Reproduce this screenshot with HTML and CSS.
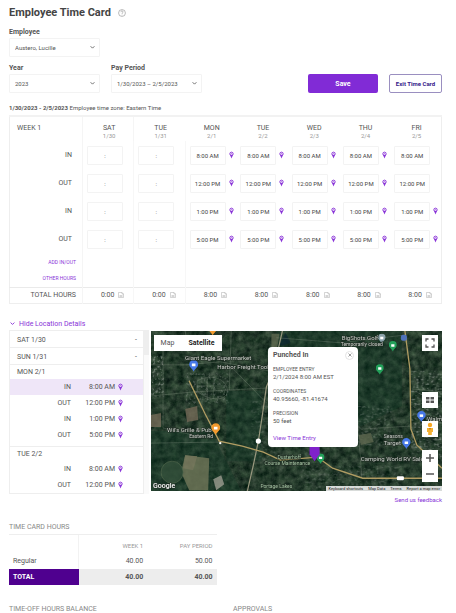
FILE: index.html
```html
<!DOCTYPE html>
<html lang="en">
<head>
    <meta charset="UTF-8">
    <meta name="viewport" content="width=device-width, initial-scale=1.0">
    <title>Employee Time Card</title>
    <link rel="stylesheet" href="styles.css">
</head>
<body>
    <!-- shared icons -->
    <svg class="sprite" aria-hidden="true">
        <symbol id="pin" viewBox="0 0 10 14">
            <circle cx="5" cy="4.6" r="3.3" fill="#fff" stroke="currentColor" stroke-width="2"/>
            <path d="M2 7h6L5 14z" fill="currentColor"/>
            <circle cx="5" cy="4.6" r="1" fill="currentColor"/>
        </symbol>
        <symbol id="note" viewBox="0 0 12 12">
            <path d="M1 1h7l3 3v7H1zM8 1v3h3M3 7h6M3 9h6" fill="none" stroke="currentColor"/>
        </symbol>
        <symbol id="place" viewBox="0 0 10 13">
            <path d="M5 13C4 10 0 8 0 5a5 5 0 0 1 10 0c0 3-4 5-5 8z" fill="currentColor"/>
            <path d="M3 4h4v3H3z" fill="#fff"/>
        </symbol>
    </svg>

    <header class="title">
        <h1>Employee Time Card</h1>
        <svg class="help" viewBox="0 0 14 14"><circle cx="7" cy="7" r="6" fill="none" stroke="#888"/><path d="M5 5.500c0-3 4-2.500 4-.3C9 6.800 7 6.500 7 8.500M7 10v1" fill="none" stroke="#888"/></svg>
    </header>

    <form class="filters">
        <div class="field">
            <label for="employee">Employee</label>
            <select id="employee"><option>Austero, Lucille</option></select>
        </div>
        <div class="filter-row">
            <div class="field">
                <label for="year">Year</label>
                <select id="year"><option>2023</option></select>
            </div>
            <div class="field">
                <label for="period">Pay Period</label>
                <select id="period"><option>1/30/2023 – 2/5/2023</option></select>
            </div>
            <div class="actions">
                <button type="button" class="btn save">Save</button>
                <button type="button" class="btn exit">Exit Time Card</button>
            </div>
        </div>
    </form>

    <p class="range"><b>1/30/2023 - 2/5/2023</b> Employee time zone: Eastern Time</p>

    <table class="week">
        <thead>
            <tr>
                <th>WEEK 1</th>
                <th>SAT<small>1/30</small></th>
                <th>TUE<small>1/31</small></th>
                <th>MON<small>2/1</small></th>
                <th>TUE<small>2/2</small></th>
                <th>WED<small>2/3</small></th>
                <th>THU<small>2/4</small></th>
                <th>FRI<small>2/5</small></th>
            </tr>
        </thead>
        <tbody id="punches"></tbody>
        <tbody class="links">
            <tr><th><a href="#">ADD IN/OUT</a></th><td></td><td></td><td></td><td></td><td></td><td></td><td></td></tr>
            <tr><th><a href="#">OTHER HOURS</a></th><td></td><td></td><td></td><td></td><td></td><td></td><td></td></tr>
        </tbody>
        <tfoot>
            <tr id="totals"><th>TOTAL HOURS</th></tr>
        </tfoot>
    </table>

    <a class="toggle" href="#"><svg viewBox="0 0 8 8"><path d="M1 2.500l3 3 3-3" fill="none" stroke="currentColor" stroke-width="1.500"/></svg>Hide Location Details</a>

    <section class="location">
        <div class="days">
            <div class="day">SAT 1/30<span>-</span></div>
            <div class="day">SUN 1/31<span>-</span></div>
            <div class="group">
                <h3>MON 2/1</h3>
                <div class="punch active"><span>IN</span><span>8:00 AM</span><svg class="pin"><use href="#pin"/></svg></div>
                <div class="punch"><span>OUT</span><span>12:00 PM</span><svg class="pin"><use href="#pin"/></svg></div>
                <div class="punch"><span>IN</span><span>1:00 PM</span><svg class="pin"><use href="#pin"/></svg></div>
                <div class="punch"><span>OUT</span><span>5:00 PM</span><svg class="pin"><use href="#pin"/></svg></div>
            </div>
            <div class="group">
                <h3>TUE 2/2</h3>
                <div class="punch"><span>IN</span><span>8:00 AM</span><svg class="pin"><use href="#pin"/></svg></div>
                <div class="punch"><span>OUT</span><span>12:00 PM</span><svg class="pin"><use href="#pin"/></svg></div>
            </div>
        </div>
        <div class="scrollbar"><i></i></div>

        <div class="map">
            <svg class="ground" viewBox="0 0 290 160" preserveAspectRatio="xMidYMid slice">
                <defs>
                    <filter id="trees" x="0" y="0" width="100%" height="100%" color-interpolation-filters="sRGB">
                        <feTurbulence type="fractalNoise" baseFrequency="0.15" numOctaves="5" seed="8"/>
                        <feColorMatrix values="0.35 0 0 0 -0.03  0.35 0.050 0 0 0.030  0.3 0 0 0 0.020  0 0 0 0 1"/>
                    </filter>
                    <filter id="roofs" x="0" y="0" width="100%" height="100%" color-interpolation-filters="sRGB">
                        <feTurbulence type="fractalNoise" baseFrequency="0.4" numOctaves="2" seed="3"/>
                        <feColorMatrix values="0 0 0 0 0.6  0 0 0 0 0.63  0 0 0 0 0.6  0 5 0 0 -2.700"/>
                    </filter>
                </defs>
                <rect width="290" height="160" filter="url(#trees)"/>
                <g fill="#143a28" opacity=".4">
                    <path d="M125 0h125v75l-40 20h-85zM0 100h60l30 60H0zM75 60h35v70H75z"/>
                </g>
                <g opacity=".6">
                    <rect y="25" width="12" height="40" filter="url(#roofs)"/>
                    <rect x="35" y="42" width="42" height="30" filter="url(#roofs)" opacity=".6"/>
                    <rect x="260" y="40" width="30" height="90" filter="url(#roofs)"/>
                    <rect x="190" y="75" width="50" height="40" filter="url(#roofs)" opacity=".6"/>
                    <rect x="150" y="135" width="100" height="25" filter="url(#roofs)" opacity=".5"/>
                    <rect x="100" y="70" width="25" height="60" filter="url(#roofs)" opacity=".4"/>
                </g>
                <g opacity=".75">
                    <path d="M0 84l10-2v14H0zM34 78l12-3 1 14-11 2z" fill="#7a6e5b"/>
                    <path d="M34 124l24 3-1 32H38l-8-18z" fill="#777b5d"/>
                    <path d="M34 124l12 1-4 14-10-2z" fill="#8b8668"/>
                    <circle cx="21" cy="141" r="11" fill="#36523c" stroke="#65785a" stroke-width=".6"/>
                    <path d="M62 148l8-4 3 9-8 6z" fill="#a6a599"/>
                    <path d="M120 3h8l-2 13-6 2zM207 104l12-2 3 9-13 3z" fill="#626b52"/>
                    <path d="M128 14l6-12 5 10-8 3z" fill="#0d2731"/>
                </g>
                <g fill="none" stroke="#a9b1a0" stroke-width=".5" opacity=".5">
                    <path d="M0 34h34l35-3 48 9M0 65l42-4 75-4M34 0l3 22M80 0l-2 59M80 36l35 36M12 12v85l34 8M46 50c14-8 30-2 30 10S55 69 46 60zM56 47v22M62 46v22M46 55h29M0 112l68-1M125 7l64 5 66-8M169 127l-10-64M210 147l-6-90M260 58l30 3M261 92h29M210 98l49-3"/>
                </g>
                <path d="M131 0l-9 39-7 17-4 28-4 26-5 24-6 26" fill="none" stroke="#99987f" stroke-width="1.200"/>
                <path d="M38 50l16 33 14 27 23 5 21 6 17 8 37-3 15 11 30 10h80M253 0l5 38 1 60 6 16 25 23" fill="none" stroke="#b09c62" stroke-width="1.300"/>
                <g fill="#fff"><circle cx="107" cy="110" r="2.600"/><circle cx="69" cy="112" r="1.200"/><rect x="245" y="145" width="7" height="4" rx="1"/></g>
                <g class="places">
                    <use href="#place" x="38" y="29" width="9" height="12" color="#4778e8"/>
                    <use href="#place" x="60" y="92" width="9" height="12" color="#f29a2e"/>
                    <use href="#place" x="57" y="-7" width="9" height="12" color="#f29a2e"/>
                    <use href="#place" x="226" y="3" width="8" height="10" color="#8ba2aa"/>
                    <use href="#place" x="237" y="10" width="8" height="11" color="#23a05a"/>
                    <use href="#place" x="224" y="33" width="8" height="11" color="#23a05a"/>
                    <use href="#place" x="250" y="107" width="9" height="11" color="#4778e8"/>
                    <use href="#place" x="265" y="80" width="9" height="11" color="#4778e8"/>
                    <use href="#place" x="165" y="122" width="8" height="11" color="#23a05a"/>
                    <rect x="249" y="4" width="6" height="6" rx="2" fill="#4f72bb"/>
                </g>
                <g class="labels">
                    <text x="34" y="29">Giant Eagle Supermarket</text>
                    <text x="66" y="38">Harbor Freight Tools</text>
                    <text x="16" y="101">Wil's Grille &amp; Pub</text>
                    <text x="38" y="107" class="tiny">Eastern Rd</text>
                    <text x="190" y="9">BigShots Golf</text>
                    <text x="189" y="15" class="tiny">Temporarily closed</text>
                    <text x="275" y="90">Walmart</text>
                    <text x="232" y="107" class="tiny">Seasons</text>
                    <text x="232" y="114">Target</text>
                    <text x="209" y="130">Camping World RV Sales</text>
                    <text x="126" y="128" class="park">Dusterhoff</text>
                    <text x="113" y="134" class="park">Course Maintenance</text>
                    <text x="109" y="157" class="park">Portage Lakes</text>
                    <text x="2" y="157" class="google">Google</text>
                </g>
                <path d="M158 116h10v7l-5 7-5-7z" fill="#7f22ca"/>
            </svg>

            <div class="map-type">
                <button type="button">Map</button>
                <button type="button" class="on">Satellite</button>
            </div>

            <div class="popup">
                <div class="popup-head">
                    <h2>Punched In</h2>
                    <button type="button" class="close" aria-label="Close"><svg viewBox="0 0 8 8"><path d="M1 1l6 6M7 1L1 7" stroke="#666" stroke-width="1.300"/></svg></button>
                </div>
                <dl>
                    <div><dt>EMPLOYEE ENTRY</dt><dd>2/1/2024 8:00 AM EST</dd></div>
                    <div><dt>COORDINATES</dt><dd>40.95660, -81.41674</dd></div>
                    <div><dt>PRECISION</dt><dd>50 feet</dd></div>
                </dl>
                <a href="#">View Time Entry</a>
            </div>

            <div class="controls">
                <button type="button" class="fullscreen" aria-label="Full screen"><svg viewBox="0 0 16 16"><path d="M4 6.500V4h2.500M9.500 4H12v2.500M12 9.500V12H9.500M6.500 12H4V9.500" fill="none" stroke="#555" stroke-width="1.300"/></svg></button>
                <button type="button" aria-label="Tilt"><svg viewBox="0 0 16 16"><path d="M4 5h3.500v2.500H4zM8.500 5H12v2.500H8.500zM4 8.500h3.500V11H4zM8.500 8.500H12V11H8.500z" fill="#555"/></svg></button>
                <button type="button" aria-label="Street view"><svg viewBox="0 0 16 16"><circle cx="8" cy="4" r="2.200" fill="#f6a623"/><path d="M5 7h6v4H9.800v3H6.200v-3H5z" fill="#f4b132"/><path d="M7 7h2l-1 2z" fill="#c4721a"/></svg></button>
                <div class="zoom">
                    <button type="button" aria-label="Zoom in"><svg viewBox="0 0 16 16"><path d="M8 4v8M4 8h8" stroke="#555" stroke-width="1.500"/></svg></button>
                    <button type="button" aria-label="Zoom out"><svg viewBox="0 0 16 16"><path d="M4 8h8" stroke="#555" stroke-width="1.500"/></svg></button>
                </div>
            </div>

            <div class="credits"><span>Keyboard shortcuts</span><span>Map Data</span><span>Terms</span><span>Report a map error</span></div>
        </div>
    </section>
    <a class="feedback" href="#">Send us feedback</a>

    <section class="hours">
        <h2>TIME CARD HOURS</h2>
        <table>
            <thead><tr><th></th><th>WEEK 1</th><th>PAY PERIOD</th></tr></thead>
            <tbody><tr><th>Regular</th><td>40.00</td><td>50.00</td></tr></tbody>
            <tfoot><tr><th>TOTAL</th><td>40.00</td><td>40.00</td></tr></tfoot>
        </table>
    </section>

    <div class="bottom">
        <h2>TIME-OFF HOURS BALANCE</h2>
        <h2>APPROVALS</h2>
    </div>

    <script>
        const rows = [
            { label: "IN", time: "8:00 AM", pins: 4 },
            { label: "OUT", time: "12:00 PM", pins: 4 },
            { label: "IN", time: "1:00 PM", pins: 5 },
            { label: "OUT", time: "5:00 PM", pins: 5 }
        ];
        const days = ["1/30", "1/31", "2/1", "2/2", "2/3", "2/4", "2/5"];

        const punches = document.getElementById('punches');
        rows.forEach(row => {
            let html = `<th>${row.label}</th>`;
            days.forEach((day, i) => {
                const worked = i > 1;
                const pin = worked && i - 2 < row.pins ? '<svg class="pin"><use href="#pin"/></svg>' : '';
                html += `<td><div class="cell"><input type="text" aria-label="${row.label} ${day}" value="${worked ? row.time : ':'}">${pin}</div></td>`;
            });
            punches.innerHTML += `<tr>${html}</tr>`;
        });

        days.forEach((day, i) => {
            document.getElementById('totals').innerHTML +=
                `<td><div class="total">${i > 1 ? '8:00' : '0:00'}<svg><use href="#note"/></svg></div></td>`;
        });
    </script>
</body>
</html>
```
FILE: styles.css
```css
* {
    box-sizing: border-box;
}
body {
    margin: 0;
    padding: 5px 14px 0 9px;
    font-family: Roboto, "Liberation Sans", sans-serif;
    font-size: 7px;
    line-height: 8px;
    color: #555;
    background: #fff;
}
h1, h2, h3, p, dl, dd {
    margin: 0;
}
a {
    color: #8a35d8;
    text-decoration: none;
}
button, input, select {
    font: inherit;
    color: inherit;
    margin: 0;
    padding: 0;
}
svg {
    display: block;
}
.sprite {
    position: absolute;
    width: 0;
    height: 0;
}
.pin {
    width: 5px;
    height: 8px;
    color: #8a35d8;
    flex: none;
}

/* heading and filters */
.title {
    display: flex;
    align-items: center;
    gap: 7px;
}
.title h1 {
    font-size: 11px;
    line-height: 16px;
    font-weight: 700;
    color: #444;
}
.help {
    width: 8px;
    height: 8px;
}
.filters {
    margin-top: 7px;
}
.field label {
    display: block;
    font-weight: 700;
    margin-bottom: 2px;
}
.field select {
    display: block;
    width: 91px;
    height: 19px;
    padding: 0 5px;
    border: 1px solid #f3f3f3;
    border-radius: 1px;
    font-size: 6px;
    appearance: none;
    background: #fff;
    background-image: url("data:image/svg+xml,%3Csvg xmlns='http://www.w3.org/2000/svg' viewBox='0 0 8 8'%3E%3Cpath d='M1 2l3 3 3-3' fill='none' stroke='%23666' stroke-width='1.500'/%3E%3C/svg%3E");
    background-repeat: no-repeat;
    background-position: right 4px center;
    background-size: 5px 5px;
}
.filter-row {
    display: flex;
    gap: 11px;
    align-items: flex-end;
    margin-top: 7px;
}
.actions {
    margin-left: auto;
    display: flex;
    gap: 11px;
}
.btn {
    height: 19px;
    border-radius: 2px;
    font-weight: 700;
    white-space: nowrap;
}
.save {
    width: 70px;
    border: 0;
    background: #812bd6;
    color: #fff;
}
.exit {
    width: 53px;
    border: 1px solid #9a8fc0;
    background: #fff;
    color: #35208a;
    font-size: 6px;
}
.range {
    margin: 11px 0 3px;
    font-size: 6px;
}

/* week grid */
.week {
    width: 100%;
    table-layout: fixed;
    border-collapse: collapse;
    border: 1px solid #eee;
    border-top: 2px solid #f2f2f2;
}
.week th, .week td {
    padding: 0;
    font-weight: 400;
}
.week th:first-child {
    width: 73px;
    text-align: right;
    padding-right: 10px;
}
.week thead th {
    height: 25px;
    padding: 7px 0 0 2px;
    text-align: center;
    vertical-align: top;
}
.week thead th:first-child {
    text-align: left;
    padding-left: 7px;
}
.week small {
    display: block;
    font-size: 6px;
    color: #999;
}
.week th:nth-child(-n+2) {
    border-right: 1px solid #f5f5f5;
}
.week td:nth-child(-n+3) {
    border-right: 1px solid #f7f7f7;
}
.week tbody tr {
    height: 28px;
}
.cell {
    display: flex;
    align-items: center;
    gap: 3px;
    padding-left: 4px;
}
.cell input {
    width: 36px;
    height: 19px;
    border: 1px solid #f3f3f3;
    border-radius: 1px;
    background: #fff;
    text-align: center;
    font-size: 6px;
    color: #444;
}
.week .links tr {
    height: 17px;
    font-size: 5px;
}
.week .links th:first-child, .week tfoot th:first-child {
    padding-right: 6px;
}
.week tfoot tr {
    height: 16px;
    border-top: 1px solid #eaeaea;
}
.week tfoot td {
    border: 0;
}
.total {
    display: flex;
    justify-content: center;
    gap: 4px;
    padding-left: 9px;
}
.total svg {
    width: 6px;
    height: 8px;
    color: #aaa;
}

/* location details */
.toggle {
    display: flex;
    align-items: center;
    gap: 4px;
    margin: 16px 0 2px 1px;
}
.toggle svg {
    width: 5px;
    height: 5px;
}
.location {
    display: flex;
}
.days {
    width: 135px;
    height: 164px;
    border: 1px solid #eee;
    overflow: hidden;
}
.day {
    display: flex;
    justify-content: space-between;
    height: 17px;
    padding: 5px 6px 0 7px;
    border-bottom: 1px solid #eee;
}
.group {
    padding-bottom: 3px;
    border-bottom: 1px solid #eee;
}
.group h3 {
    font-size: 7px;
    font-weight: 400;
    line-height: 14px;
    padding-left: 7px;
}
.punch {
    display: grid;
    grid-template-columns: 61px 44px 8px;
    align-items: center;
    height: 16px;
    text-align: right;
}
.punch .pin {
    margin-left: 3px;
}
.active {
    background: #efe6f8;
}
.scrollbar {
    width: 5px;
    background: #fafafa;
}
.scrollbar i {
    display: block;
    height: 25px;
    background: #eee;
}
.map {
    position: relative;
    flex: 1;
    height: 160px;
    margin: 1px 0 0 2px;
    overflow: hidden;
    background: #263d2e;
}
.ground {
    width: 100%;
    height: 100%;
}
.labels text {
    font-size: 6px;
    fill: #c9cfc8;
    stroke: #222c25;
    stroke-width: 1px;
    paint-order: stroke;
}
.labels .tiny {
    font-size: 5px;
}
.labels .park {
    font-size: 5px;
    fill: #a5c6a3;
}
.labels .google {
    font-size: 7px;
    font-weight: 500;
    fill: #fff;
}
.map button {
    background: #fff;
    border: 0;
}
.map-type {
    position: absolute;
    top: 4px;
    left: 3px;
    display: flex;
    background: #fff;
    border-radius: 1px;
    font-size: 7px;
}
.map-type button {
    width: 27px;
    height: 16px;
}
.map-type .on {
    width: 41px;
    font-weight: 700;
    color: #222;
}
.popup {
    position: absolute;
    top: 16px;
    left: 117px;
    width: 90px;
    height: 100px;
    padding: 4px 4px 0 5px;
    border-radius: 4px;
    background: #fff;
    font-size: 6px;
}
.popup-head {
    display: flex;
    justify-content: space-between;
    align-items: center;
}
.popup h2 {
    font-size: 7px;
    font-weight: 700;
}
.map .close {
    display: flex;
    align-items: center;
    justify-content: center;
    width: 9px;
    height: 9px;
    border: 1px solid #e4e4e4;
    border-radius: 50%;
}
.close svg {
    width: 4px;
    height: 4px;
}
.popup dl div {
    height: 22px;
    padding-top: 6px;
}
.popup dt {
    font-size: 5px;
    line-height: 7px;
}
.popup dd {
    line-height: 8px;
}
.popup a {
    display: block;
    margin-top: 8px;
}
.controls {
    position: absolute;
    top: 4px;
    right: 4px;
    display: flex;
    flex-direction: column;
    gap: 13px;
}
.controls button {
    display: block;
    width: 16px;
    height: 16px;
}
.controls .fullscreen {
    margin-bottom: 28px;
}
.credits {
    position: absolute;
    right: 0;
    bottom: 0;
    display: flex;
    gap: 5px;
    padding: 0 2px;
    background: #d9dcda;
    color: #222;
    font-size: 4px;
    line-height: 5px;
}
.feedback {
    display: block;
    margin-top: 2px;
    text-align: right;
    font-size: 6px;
}

/* summaries */
.hours {
    width: 208px;
    margin-top: 19px;
}
.hours h2, .bottom h2 {
    font-size: 7px;
    font-weight: 400;
    color: #888;
}
.hours h2 {
    padding-bottom: 3px;
    border-bottom: 1px solid #eee;
}
.hours table {
    width: 100%;
    table-layout: fixed;
    border-collapse: collapse;
}
.hours th, .hours td {
    height: 16px;
    padding: 0 4px;
    text-align: right;
    font-weight: 400;
}
.hours th:first-child {
    width: 69px;
    text-align: left;
    border-right: 1px solid #f2f2f2;
}
.hours thead th {
    height: 18px;
    padding-top: 4px;
    font-size: 6px;
    color: #999;
}
.hours tfoot th, .hours tfoot td {
    font-weight: 700;
    background: #ededed;
}
.hours tfoot th:first-child {
    background: #4f008f;
    color: #fff;
    border-color: #4f008f;
}
.bottom {
    display: grid;
    grid-template-columns: 224px 1fr;
    margin-top: 20px;
}
```
